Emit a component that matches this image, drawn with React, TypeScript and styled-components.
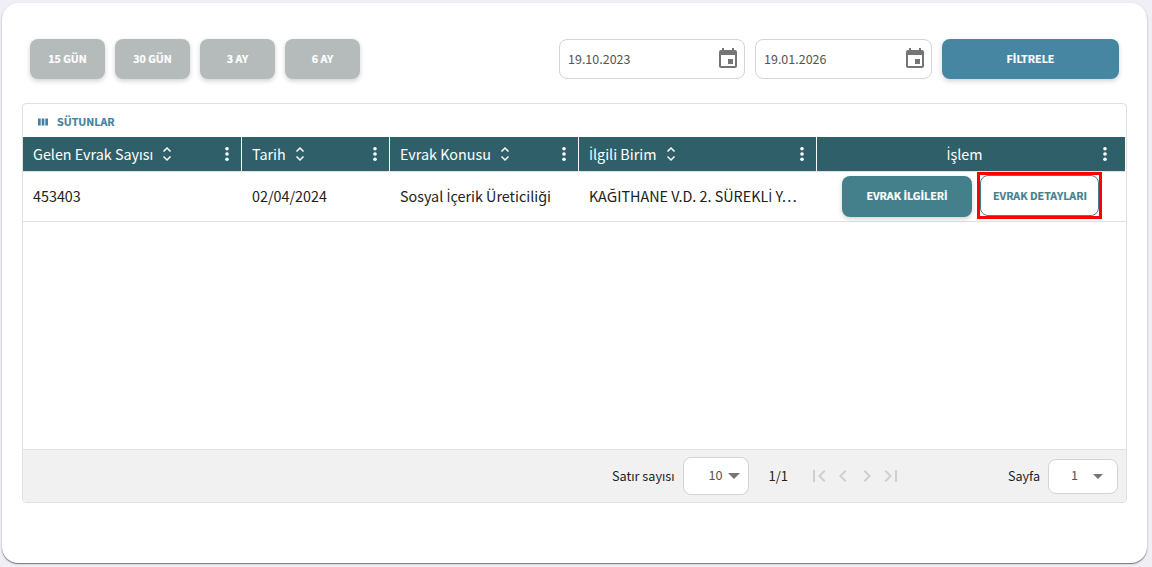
import React from "react";
import styled, { createGlobalStyle } from "styled-components";

const Global = createGlobalStyle`
  * { box-sizing: border-box; }
  html, body { height: 100%; }
  body {
    margin: 0;
    background: #f0eff6;
    font-family: "Noto Sans CJK SC", "Noto Sans", sans-serif;
    color: #212121;
    overflow: hidden;
  }
  button { font-family: inherit; border: 0; padding: 0; margin: 0; }
`;

const Card = styled.main`
  display: flex;
  flex-direction: column;
  width: 1145px;
  height: 560px;
  margin: 3px 0 0 2px;
  padding: 36px 20px 0;
  background: #fff;
  border-radius: 16px;
  box-shadow: 0 1px 1px rgba(0, 0, 0, 0.45), 0 1px 3px rgba(0, 0, 0, 0.14);
`;

const Toolbar = styled.div`
  display: flex;
  gap: 10px;
  height: 40px;
  padding: 0 8px;
`;

const Spacer = styled.div`
  flex: 1;
`;

const ActionButton = styled.button<{ $w: number; $bg: string; $h?: number }>`
  display: flex;
  align-items: center;
  justify-content: center;
  flex: none;
  width: ${(p) => p.$w}px;
  height: ${(p) => p.$h ?? 40}px;
  padding-bottom: ${(p) => (p.$h ? 2 : 0)}px;
  border-radius: 8px;
  background: ${(p) => p.$bg};
  color: #fff;
  box-shadow: 0 2px 5px rgba(0, 0, 0, 0.18);
`;

const Label = styled.span<{ $size: number; $color?: string }>`
  font-size: ${(p) => p.$size}px;
  color: ${(p) => p.$color ?? "inherit"};
  line-height: 20px;
  white-space: nowrap;
`;

const Caps = styled(Label)`
  font-weight: 700;
  -webkit-text-stroke: 0.2px currentColor;
`;

const DottedI = styled.span`
  font-family: "Open Sans", sans-serif;
  line-height: 0;
`;

const tr = (text: string) =>
  text.split(/(İ)/).map((part, i) => (part === "İ" ? <DottedI key={i}>İ</DottedI> : part));

const PageCount = styled(Label)`
  margin-left: 20px;
`;

const DateField = styled.div<{ $w: number }>`
  display: flex;
  align-items: center;
  justify-content: space-between;
  width: ${(p) => p.$w}px;
  height: 40px;
  padding: 0 4px 0 8px;
  border: 1px solid #d3d3d8;
  border-radius: 8px;
  background: #fff;
`;

const Grid = styled.section`
  display: flex;
  flex-direction: column;
  width: 1105px;
  height: 400px;
  margin-top: 24px;
  border: 1px solid #e0e0e0;
  border-radius: 4px;
  overflow: hidden;
`;

const GridTools = styled.div`
  display: flex;
  align-items: center;
  height: 33px;
  padding: 3px 0 0 15px;
  gap: 9px;
  color: #44809f;
`;

const Row = styled.div`
  display: flex;
  height: 50px;
  border-bottom: 1px solid #e0e0e0;
`;

const HeaderRow = styled(Row)`
  height: 35px;
  width: 1102px;
  background: #2f606a;
  color: #fff;
`;

const Cell = styled.div<{ $w: number }>`
  display: flex;
  align-items: center;
  flex: none;
  width: ${(p) => p.$w}px;
  padding: 0 0 1px 10px;
`;

const HeadCell = styled(Cell)<{ $last?: boolean }>`
  border-right: ${(p) => (p.$last ? 0 : 1)}px solid #fff;
  padding: 0 ${(p) => (p.$last ? 11 : 5)}px 0 10px;
  gap: 4px;
  > :last-child { margin-left: auto; }
`;

const HeadTitle = styled.div`
  display: flex;
  flex: 1;
  justify-content: center;
  padding-left: 10px;
`;

const Actions = styled.div`
  display: flex;
  align-items: center;
  padding-left: 25px;
  gap: 5px;
`;

const Highlight = styled.div`
  display: flex;
  width: 125px;
  height: 47px;
  border: 3px solid #f00;
  margin-top: -2px;
`;

const OutlineButton = styled.button`
  width: 119px;
  height: 41px;
  padding-left: 1px;
  border: 1px solid #447f8c;
  border-radius: 8px;
  background: #fff;
  color: #447f8c;
`;

const Footer = styled.footer`
  display: flex;
  align-items: center;
  height: 53px;
  margin-top: auto;
  padding: 0 8px 0 589px;
  background: #f1f1f1;
  border-top: 1px solid #e0e0e0;
`;

const Select = styled.div<{ $w: number; $h: number; $pl: number; $gap: number }>`
  display: flex;
  align-items: center;
  width: ${(p) => p.$w}px;
  height: ${(p) => p.$h}px;
  margin-left: 8px;
  padding-left: ${(p) => p.$pl}px;
  gap: ${(p) => p.$gap}px;
  border: 1px solid #d3d3d8;
  border-radius: 8px;
  background: #fff;
  color: #555;
  > span { margin-top: -3px; }
`;

const Pager = styled.div`
  display: flex;
  margin-left: 18.5px;
  color: #cfcfcf;
`;

const SortIcon = () => (
  <svg width="20" height="20" viewBox="0 0 20 20" fill="none" stroke="currentColor" strokeWidth="1.5">
    <path d="M6.5 7.5 10 4l3.5 3.5M6.5 12.5 10 16l3.5-3.5" />
  </svg>
);

const DotsIcon = () => (
  <svg width="18" height="20" viewBox="0 0 18 20" fill="currentColor">
    <circle cx="9" cy="4.7" r="1.8" />
    <circle cx="9" cy="10" r="1.8" />
    <circle cx="9" cy="15.3" r="1.8" />
  </svg>
);

const CalendarIcon = () => (
  <svg width="24" height="24" viewBox="0 0 24 24" fill="#757575">
    <path d="M17 12h-5v5h5v-5zM16 1v2H8V1H6v2H5c-1.11 0-1.99.9-1.99 2L3 19c0 1.1.89 2 2 2h14c1.1 0 2-.9 2-2V5c0-1.1-.9-2-2-2h-1V1h-2zm3 18H5V8h14v11z" />
  </svg>
);

const ColumnsIcon = () => (
  <svg width="10" height="8" viewBox="0 0 10 8" fill="currentColor">
    <path d="M0 .5h2.7v7H0zM3.65.5h2.7v7h-2.7zM7.3.5H10v7H7.3z" />
  </svg>
);

const Caret = ({ w = 12 }: { w?: number }) => (
  <svg width={w} height={w / 2} viewBox="0 0 12 6" fill="#757575">
    <path d="M0 0h12L6 6z" />
  </svg>
);

const PageIcon = ({ d }: { d: string }) => (
  <svg width="24" height="24" viewBox="0 0 24 24" fill="currentColor">
    <path d={d} />
  </svg>
);

const pageIcons = [
  "M18.41 16.59L13.82 12l4.59-4.59L17 6l-6 6 6 6zM6 6h2v12H6z",
  "M15.41 7.41L14 6l-6 6 6 6 1.41-1.41L10.83 12z",
  "M10 6L8.59 7.41 13.17 12l-4.58 4.59L10 18l6-6z",
  "M5.59 7.41L10.18 12l-4.59 4.59L7 18l6-6-6-6zM16 6h2v12h-2z",
];

const columns = [
  { title: "Gelen Evrak Sayısı", value: "453403", w: 219 },
  { title: "Tarih", value: "02/04/2024", w: 148 },
  { title: "Evrak Konusu", value: "Sosyal İçerik Üreticiliği", w: 189 },
  { title: "İlgili Birim", value: "KAĞITHANE V.D. 2. SÜREKLİ Y…", w: 238 },
];

export default function App() {
  return (
    <>
      <Global />
      <Card>
        <Toolbar>
          {["15 GÜN", "30 GÜN", "3 AY", "6 AY"].map((t) => (
            <ActionButton key={t} $w={75} $bg="#b5bbbb">
              <Caps $size={10.7}>{t}</Caps>
            </ActionButton>
          ))}
          <Spacer />
          <DateField $w={186}>
            <Label $size={12.5} $color="#555">19.10.2023</Label>
            <CalendarIcon />
          </DateField>
          <DateField $w={177}>
            <Label $size={12.5} $color="#555">19.01.2026</Label>
            <CalendarIcon />
          </DateField>
          <ActionButton $w={177} $bg="#4786a2">
            <Caps $size={10.7}>{tr("FİLTRELE")}</Caps>
          </ActionButton>
        </Toolbar>
        <Grid>
          <GridTools>
            <ColumnsIcon />
            <Caps $size={10.7}>SÜTUNLAR</Caps>
          </GridTools>
          <HeaderRow>
            {columns.map((c) => (
              <HeadCell key={c.title} $w={c.w}>
                <Label $size={14.35}>{tr(c.title)}</Label>
                <SortIcon />
                <DotsIcon />
              </HeadCell>
            ))}
            <HeadCell $w={308} $last>
              <HeadTitle><Label $size={14.35}>{tr("İşlem")}</Label></HeadTitle>
              <DotsIcon />
            </HeadCell>
          </HeaderRow>
          <Row>
            {columns.map((c) => (
              <Cell key={c.title} $w={c.w}>
                <Label $size={14.35}>{tr(c.value)}</Label>
              </Cell>
            ))}
            <Actions>
              <ActionButton $w={130} $h={41} $bg="#447f8c">
                <Caps $size={10.7}>{tr("EVRAK İLGİLERİ")}</Caps>
              </ActionButton>
              <Highlight>
                <OutlineButton>
                  <Caps $size={10.7}>EVRAK DETAYLARI</Caps>
                </OutlineButton>
              </Highlight>
            </Actions>
          </Row>
          <Footer>
            <Label $size={12.7}>Satır sayısı</Label>
            <Select $w={66} $h={38} $pl={25} $gap={5}>
              <Label $size={12.7}>10</Label>
              <Caret />
            </Select>
            <PageCount $size={13}>1/1</PageCount>
            <Pager>
              {pageIcons.map((d) => <PageIcon key={d} d={d} />)}
            </Pager>
            <Spacer />
            <Label $size={12.6}>Sayfa</Label>
            <Select $w={70} $h={35} $pl={22} $gap={15}>
              <Label $size={12.7}>1</Label>
              <Caret w={10} />
            </Select>
          </Footer>
        </Grid>
      </Card>
    </>
  );
}
